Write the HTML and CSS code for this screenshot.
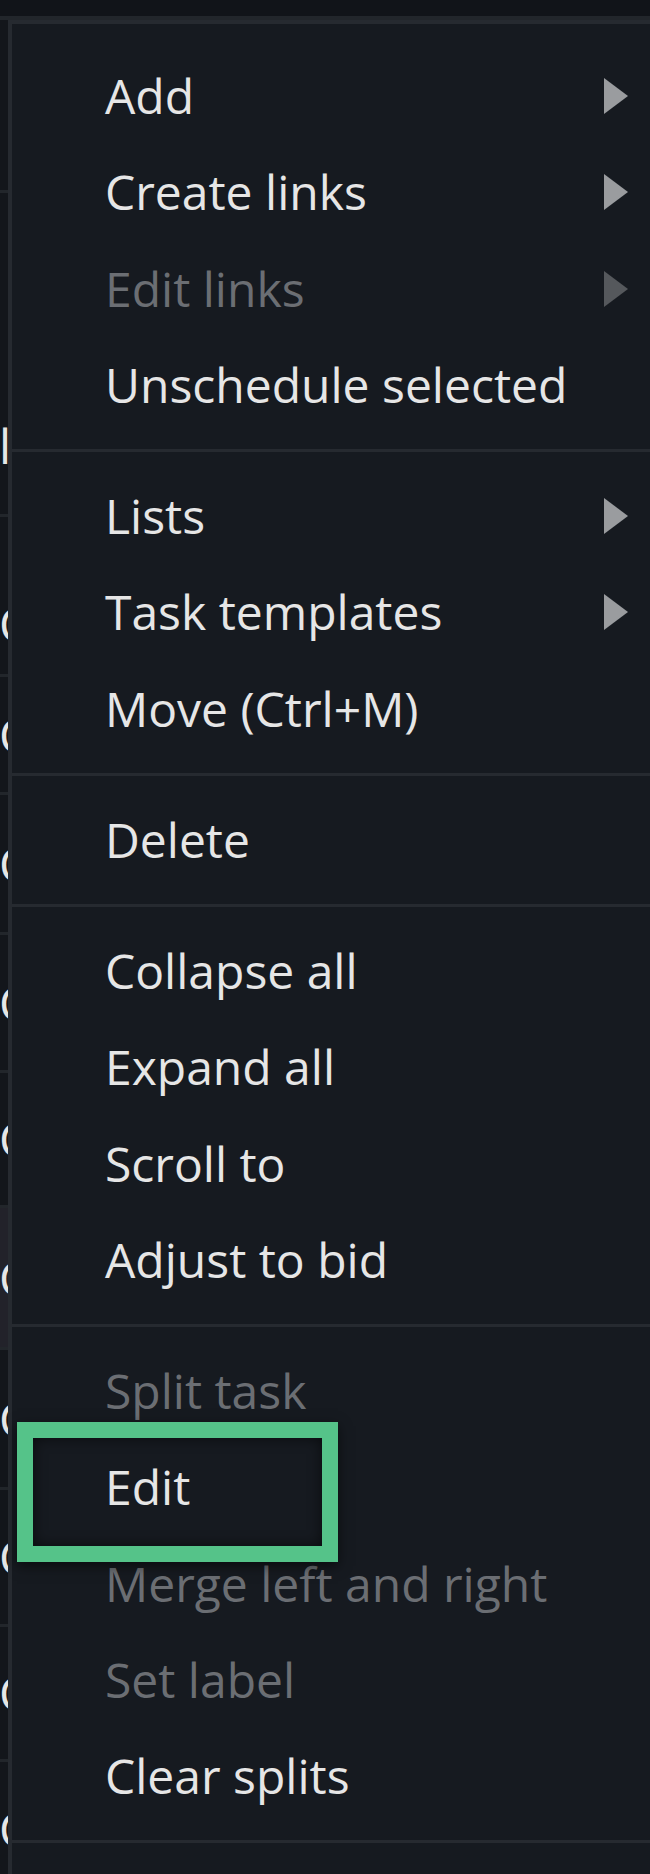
FILE: index.html
```html
<!DOCTYPE html>
<html lang="en">
<head>
<meta charset="utf-8">
<title>Context menu</title>
<link rel="stylesheet" href="styles.css">
</head>
<body>
<div class="app">
  <div class="topbar"></div>
  <div class="grid">
    <div class="row"></div>
    <div class="row"><span class="cell-text">l.</span></div>
    <div class="row"><span class="cell-text">C</span></div>
    <div class="row"><span class="cell-text">C</span></div>
    <div class="row"><span class="cell-text">C</span></div>
    <div class="row"><span class="cell-text">C</span></div>
    <div class="row"><span class="cell-text">C</span></div>
    <div class="row row-selected"><span class="cell-text">C</span></div>
    <div class="row"><span class="cell-text">C</span></div>
    <div class="row"><span class="cell-text">C</span></div>
    <div class="row"><span class="cell-text">C</span></div>
    <div class="row"><span class="cell-text">C</span></div>
  </div>

  <div class="menu">
    <div class="group group-first">
      <div class="item"><span>Add</span><span class="arrow"></span></div>
      <div class="item"><span>Create links</span><span class="arrow"></span></div>
      <div class="item disabled"><span>Edit links</span><span class="arrow"></span></div>
      <div class="item"><span>Unschedule selected</span></div>
    </div>
    <div class="sep"></div>
    <div class="group">
      <div class="item"><span>Lists</span><span class="arrow"></span></div>
      <div class="item"><span>Task templates</span><span class="arrow"></span></div>
      <div class="item"><span>Move (Ctrl+M)</span></div>
    </div>
    <div class="sep"></div>
    <div class="group">
      <div class="item"><span>Delete</span></div>
    </div>
    <div class="sep"></div>
    <div class="group">
      <div class="item"><span>Collapse all</span></div>
      <div class="item"><span>Expand all</span></div>
      <div class="item"><span>Scroll to</span></div>
      <div class="item"><span>Adjust to bid</span></div>
    </div>
    <div class="sep"></div>
    <div class="group">
      <div class="item disabled"><span>Split task</span></div>
      <div class="item"><span>Edit</span></div>
      <div class="item disabled"><span>Merge left and right</span></div>
      <div class="item disabled"><span>Set label</span></div>
      <div class="item"><span>Clear splits</span></div>
    </div>
    <div class="sep"></div>
    <div class="group"></div>
  </div>

  <div class="highlight"></div>
</div>
</body>
</html>
```

FILE: styles.css
```css
html, body {
  margin: 0;
  padding: 0;
  background: #13161b;
}

.app {
  position: relative;
  width: 650px;
  height: 1874px;
  overflow: hidden;
  font-family: "Open Sans", "Noto Sans", sans-serif;
}

.topbar {
  height: 16px;
  background: #111419;
  border-bottom: 4px solid #22262b;
}

/* Background task list (mostly hidden behind the menu) */
.grid {
  display: flex;
  flex-direction: column;
}

.row {
  height: 137px;
  flex: none;
  border-bottom: 3px solid #22262b;
  display: flex;
  align-items: center;
  color: #e6e6e6;
  font-size: 48px;
  line-height: 1;
  overflow: hidden;
  box-sizing: border-box;
}

.row:nth-child(1) { height: 173px; }
.row:nth-child(2) { height: 324px; align-items: flex-end; padding-bottom: 44px; }
.row:nth-child(3) { height: 160px; align-items: flex-end; padding-bottom: 26px; }
.row:nth-child(4) { height: 118px; }
.row:nth-child(5) { height: 140px; }
.row:nth-child(6) { height: 138px; }
.row:nth-child(7) { height: 135px; }
.row:nth-child(8) { height: 142px; }
.row:nth-child(9) { height: 140px; }
.row:nth-child(10) { height: 137px; }
.row:nth-child(11) { height: 135px; }

.row-selected {
  background: #22222a;
}

.cell-text {
  margin-left: -1px;
}

/* Context menu overlay */
.menu {
  position: absolute;
  left: 8px;
  top: 20px;
  right: 0;
  bottom: 0;
  background: #161a20;
  border-left: 4px solid #262a30;
  border-top: 4px solid #262a30;
  color: #e6e6e6;
  font-size: 48px;
  line-height: 1;
}

.group {
  padding: 16px 0;
}

.group-first {
  padding-top: 24px;
}

.item {
  height: 96.25px;
  display: flex;
  align-items: center;
  justify-content: space-between;
  padding: 0 22px 0 93px;
  white-space: nowrap;
}

.item.disabled {
  color: #6b6e73;
}

.arrow {
  width: 0;
  height: 0;
  border-top: 18px solid transparent;
  border-bottom: 18px solid transparent;
  border-left: 24px solid #9a9c9f;
}

.item.disabled .arrow {
  border-left-color: #55585c;
}

.sep {
  height: 3px;
  background: #262a30;
}

/* Annotation box */
.highlight {
  position: absolute;
  left: 17px;
  top: 1422px;
  width: 321px;
  height: 140px;
  box-sizing: border-box;
  border: 16px solid #55c389;
  box-shadow: 0 4px 12px rgba(0, 0, 0, 0.55), inset 0 0 14px rgba(0, 0, 0, 0.6);
}
```
